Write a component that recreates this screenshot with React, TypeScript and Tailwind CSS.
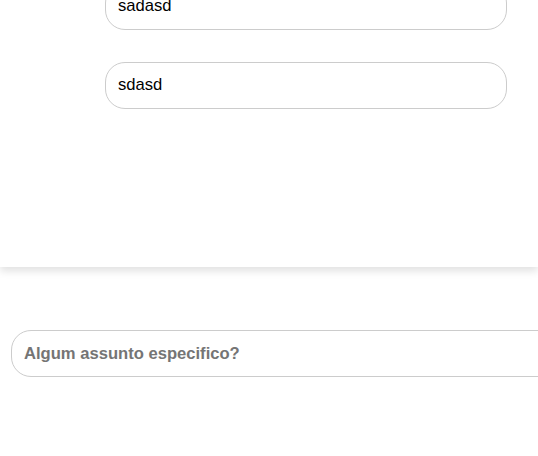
import React from "react";

export default function App() {
  const msgs = ["sadasd", "sdasd"];
  return (
    <div
      className="w-[538px] h-[456px] overflow-hidden bg-white"
      style={{ fontFamily: '"Liberation Sans", Arial, sans-serif' }}
    >
      <div className="relative z-10 h-[267px] overflow-hidden bg-white shadow-[0_4px_8px_rgba(0,0,0,0.12)]">
        <div className="-mt-[17px] flex flex-col gap-[32px] pl-[105px]">
          {msgs.map((m) => (
            <div
              key={m}
              className="w-[402px] h-[47px] flex items-center px-[12px] pb-[1px] border border-[#cccccc] rounded-[20px] text-[16.6px] text-black"
            >
              {m}
            </div>
          ))}
        </div>
      </div>
      <div className="pt-[63px] pl-[11px]">
        <input
          readOnly
          placeholder="Algum assunto especifico?"
          className="w-[560px] h-[47px] px-[12px] border border-[#cccccc] rounded-[20px] text-[16.6px] font-bold placeholder:text-[#757575] outline-none"
          style={{ fontFamily: '"Liberation Sans", Arial, sans-serif' }}
        />
      </div>
    </div>
  );
}
